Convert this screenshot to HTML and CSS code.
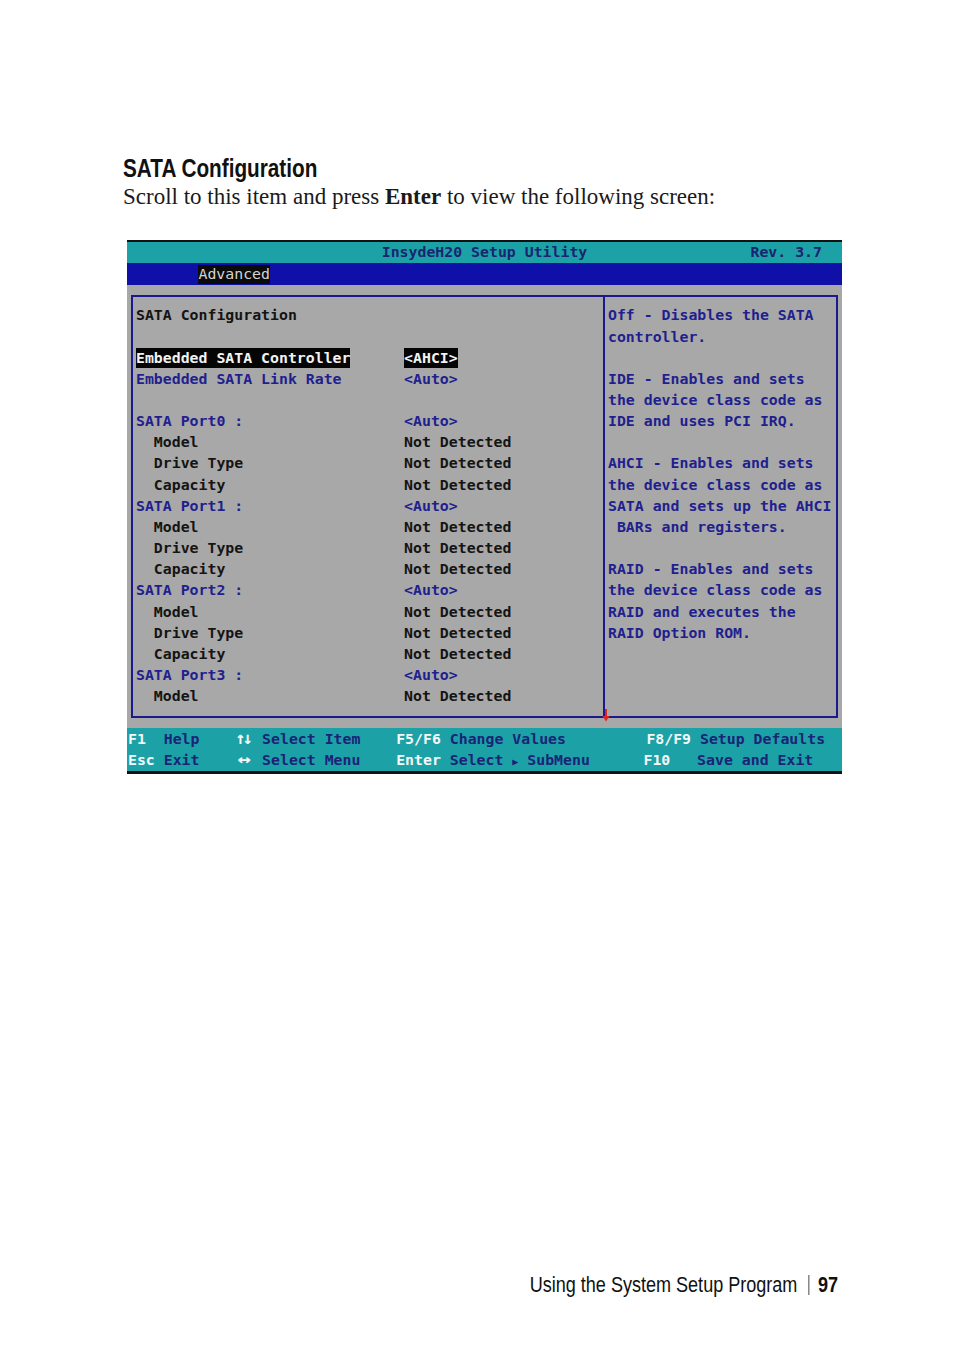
FILE: index.html
```html
<!DOCTYPE html>
<html lang="en">
<head>
  <meta charset="UTF-8">
  <meta name="viewport" content="width=device-width, initial-scale=1.0">
  <title>SATA Configuration</title>
  <link rel="stylesheet" href="styles.css">
</head>
<body>
  <div class="page">
    <h1 class="title"><span class="narrow">SATA Configuration</span></h1>
    <p class="lead">Scroll to this item and press <b>Enter</b> to view the following screen:</p>

    <div class="bios">
      <div class="bios-title">
        <span></span>
        <span class="bios-name">InsydeH20 Setup Utility</span>
        <span class="bios-rev">Rev. 3.7</span>
      </div>
      <div class="bios-menu"><span class="menu-active">Advanced</span></div>

      <div class="bios-body">
        <div class="frame">
          <div class="pane-main">
            <div class="row"><span class="dark">SATA Configuration</span></div>
            <div class="row"> </div>
            <div class="row"><span><span class="sel">Embedded SATA Controller</span></span><span><span class="sel">&lt;AHCI&gt;</span></span></div>
            <div class="row"><span class="blue">Embedded SATA Link Rate</span><span class="blue">&lt;Auto&gt;</span></div>
            <div class="row"> </div>
            <div class="row"><span class="blue">SATA Port0 :</span><span class="blue">&lt;Auto&gt;</span></div>
            <div class="row"><span class="dark">  Model</span><span class="dark">Not Detected</span></div>
            <div class="row"><span class="dark">  Drive Type</span><span class="dark">Not Detected</span></div>
            <div class="row"><span class="dark">  Capacity</span><span class="dark">Not Detected</span></div>
            <div class="row"><span class="blue">SATA Port1 :</span><span class="blue">&lt;Auto&gt;</span></div>
            <div class="row"><span class="dark">  Model</span><span class="dark">Not Detected</span></div>
            <div class="row"><span class="dark">  Drive Type</span><span class="dark">Not Detected</span></div>
            <div class="row"><span class="dark">  Capacity</span><span class="dark">Not Detected</span></div>
            <div class="row"><span class="blue">SATA Port2 :</span><span class="blue">&lt;Auto&gt;</span></div>
            <div class="row"><span class="dark">  Model</span><span class="dark">Not Detected</span></div>
            <div class="row"><span class="dark">  Drive Type</span><span class="dark">Not Detected</span></div>
            <div class="row"><span class="dark">  Capacity</span><span class="dark">Not Detected</span></div>
            <div class="row"><span class="blue">SATA Port3 :</span><span class="blue">&lt;Auto&gt;</span></div>
            <div class="row"><span class="dark">  Model</span><span class="dark">Not Detected</span></div>
          </div>

          <div class="pane-help">
            <div class="line">Off - Disables the SATA</div>
            <div class="line">controller.</div>
            <div class="line"> </div>
            <div class="line">IDE - Enables and sets</div>
            <div class="line">the device class code as</div>
            <div class="line">IDE and uses PCI IRQ.</div>
            <div class="line"> </div>
            <div class="line">AHCI - Enables and sets</div>
            <div class="line">the device class code as</div>
            <div class="line">SATA and sets up the AHCI</div>
            <div class="line"> BARs and registers.</div>
            <div class="line"> </div>
            <div class="line">RAID - Enables and sets</div>
            <div class="line">the device class code as</div>
            <div class="line">RAID and executes the</div>
            <div class="line">RAID Option ROM.</div>
          </div>

          <svg class="scroll-arrow" width="8" height="13" viewBox="0 0 8 13">
            <path d="M4 0 V9" stroke="#e02424" stroke-width="2"/>
            <path d="M0.5 7 L4 12.5 L7.5 7 Z" fill="#e02424"/>
          </svg>
        </div>
      </div>

      <div class="bios-keys">
        <div class="keyrow"><span class="k">F1</span>  Help    <span class="k arr">↑↓</span> Select Item    <span class="k">F5/F6</span> Change Values         <span class="k">F8/F9</span> Setup Defaults</div>
        <div class="keyrow"><span class="k">Esc</span> Exit    <span class="k arr wide">↔</span> Select Menu    <span class="k">Enter</span> Select <span class="tri">▶</span> SubMenu      <span class="k">F10</span>   Save and Exit</div>
      </div>
    </div>

    <footer class="page-foot">
      <span class="foot-text">Using the System Setup Program<span class="page-num">97</span></span>
    </footer>
  </div>
</body>
</html>
```

FILE: styles.css
```css
body {
  margin: 0;
  background-color: white;
  color: #111;
}

.page {
  height: 1354px;
  display: flex;
  flex-direction: column;
  box-sizing: border-box;
  padding-top: 153px;
}

/* Arial Narrow look: Liberation Sans squeezed to 82% */
.title {
  margin: 0 0 0 123px;
  font-family: "Liberation Sans", Arial, sans-serif;
  font-weight: bold;
  font-size: 25px;
  line-height: 30px;
  color: #111;
}

.narrow {
  display: inline-block;
  transform: scaleX(0.83);
  transform-origin: left center;
}

.lead {
  margin: 1px 0 0 123px;
  font-family: "Liberation Serif", serif;
  font-size: 23px;
  line-height: 26px;
  color: #1a1a1a;
}

/* BIOS screen */
.bios {
  width: 715px;
  margin: 30px 0 0 127px;
  border-top: 2px solid #111;
  border-bottom: 3px solid #111;
  font-family: "DejaVu Sans Mono", "Liberation Mono", monospace;
  font-size: 14.85px;
  font-weight: bold;
  background-color: #a8a8a8;
}

.bios-title {
  height: 21px;
  line-height: 21px;
  background-color: #1ca2a6;
  color: #1b2470;
  display: grid;
  grid-template-columns: 1fr auto 1fr;
  white-space: pre;
}

.bios-rev {
  justify-self: end;
  padding-right: 20px;
}

.bios-menu {
  height: 22px;
  background-color: #0f10a8;
  padding-left: 8ch;
  display: flex;
  align-items: center;
}

.menu-active {
  background-color: #0b0b0b;
  color: #d4d4d4;
  font-weight: normal;
  line-height: 19px;
}

.bios-body {
  padding: 10px 4px;
}

.frame {
  position: relative;
  display: flex;
  border: 2px solid #1a1a8c;
}

.pane-main {
  width: 472px;
  padding: 8.4px 0 8.4px 3px;
  box-sizing: border-box;
  border-right: 2px solid #1a1a8c;
}

.row {
  display: grid;
  grid-template-columns: 30ch 1fr;
  height: 21.17px;
  line-height: 21.17px;
  white-space: pre;
}

.dark {
  color: #141414;
}

.blue {
  color: #1f1f8e;
}

.sel {
  background-color: #050505;
  color: #f2f2f2;
  padding: 1px 0;
}

.pane-help {
  flex: 1;
  padding: 8.4px 0 8.4px 3px;
  color: #1f1f8e;
}

.line {
  height: 21.17px;
  line-height: 21.17px;
  white-space: pre;
}

.scroll-arrow {
  position: absolute;
  left: 469px;
  bottom: -6px;
}

.bios-keys {
  background-color: #1ca2a6;
  padding: 1px 0 0 1px;
  height: 43px;
  box-sizing: border-box;
  color: #1b2378;
}

.keyrow {
  height: 21.17px;
  line-height: 21.17px;
  white-space: pre;
}

.k {
  color: #f4f8f8;
}

.arr {
  display: inline-block;
  width: 17.9px;
  font-size: 17px;
  line-height: 17px;
  letter-spacing: -3px;
}

.wide {
  text-align: center;
  letter-spacing: 0;
  transform: scaleX(1.3);
}

.tri {
  font-size: 10px;
}

.page-foot {
  margin-top: auto;
  padding: 0 116px 57px 0;
  display: flex;
  justify-content: flex-end;
  font-family: "Liberation Sans", Arial, sans-serif;
  font-size: 22px;
  line-height: 24px;
  color: #111;
}

.foot-text {
  display: inline-block;
  transform: scaleX(0.82);
  transform-origin: right center;
}

.page-num {
  display: inline-block;
  margin-left: 14px;
  padding-left: 10px;
  border-left: 1px solid #222;
  line-height: 20px;
  font-weight: bold;
}
```
